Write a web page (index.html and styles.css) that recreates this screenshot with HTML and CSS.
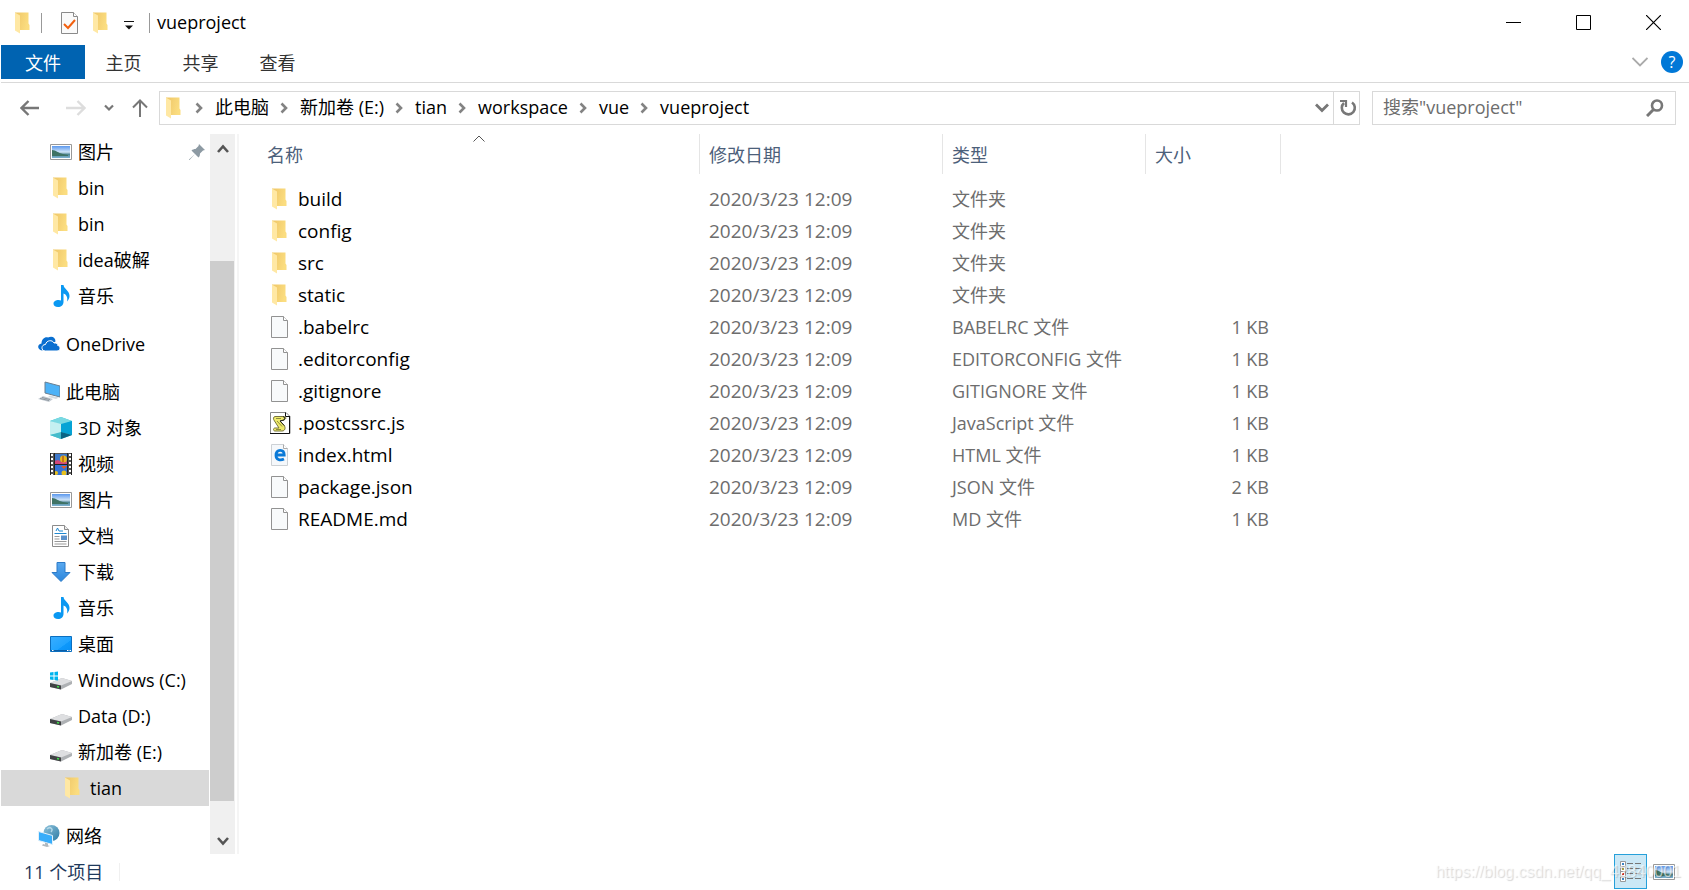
FILE: index.html
```html
<!DOCTYPE html>
<html lang="zh-CN">
<head>
<meta charset="utf-8">
<title>vueproject</title>
<link rel="stylesheet" href="styles.css">
</head>
<body>
<svg class="defs" aria-hidden="true">
  <defs>
    <linearGradient id="gf" x1="0" x2="1" y1="0" y2="0.3"><stop offset="0" stop-color="#eec566"/><stop offset="1" stop-color="#fbdd80"/></linearGradient>
    <linearGradient id="gp" x1="0" x2="0" y1="0" y2="1"><stop offset="0" stop-color="#5b98ee"/><stop offset="0.5" stop-color="#cfe4f8"/><stop offset="0.7" stop-color="#4f8694"/><stop offset="1" stop-color="#7fb4d4"/></linearGradient>
    <linearGradient id="gd" x1="0" x2="1" y1="0" y2="1"><stop offset="0" stop-color="#3aaeff"/><stop offset="0.6" stop-color="#1fa3ff"/><stop offset="0.62" stop-color="#0d98fb"/><stop offset="1" stop-color="#0890f5"/></linearGradient>
    <linearGradient id="ga" x1="0" x2="0" y1="0" y2="1"><stop offset="0" stop-color="#5aa9ef"/><stop offset="1" stop-color="#2b86dc"/></linearGradient>
    <linearGradient id="gg" x1="0" x2="1" y1="0" y2="1"><stop offset="0" stop-color="#8fc3dc"/><stop offset="1" stop-color="#2d7ba4"/></linearGradient>
    <symbol id="folder" viewBox="0 0 22 22"><path d="M3 .5h13.500v11l1 1.500v5H3z" fill="url(#gf)"/><path d="M3 .5l5 3v18L3 18.500z" fill="#ffe8a4"/></symbol>
    <symbol id="picture" viewBox="0 0 22 22"><path d="M.5 3.500h21v15H.5z" fill="#fff" stroke="#999"/><path d="M2 5h18v12H2z" fill="url(#gp)"/><path d="M2 9c4 0 6 3 11 4l5 1v1H2z" fill="#3f7364"/></symbol>
    <symbol id="music" viewBox="0 0 22 22"><path d="M11 0h2.500c.5 4 6 5.500 6 11 0 2-1 4-2.500 5.500 1-4-.5-7-3.500-8V17c0 3-2.500 5-5.500 5S3.500 20.500 3.500 18.500s2.500-3.500 5-3.500c1 0 1.800.2 2.500.5z" fill="#0a98f2"/></symbol>
    <symbol id="cloud" viewBox="0 0 22 22"><path d="M4 17.500c-5-.5-5-6.500-.5-7C3.500 6 7 3.500 10 4.500c4-2 7.500 0 7.500 4" fill="#0a6fd0"/><path d="M7.500 18C2.500 18 3 11.500 7.500 11.500 8.500 7 14.500 6.500 16 10c3-.5 4 1 3.700 2.500 3.300.5 3 5.500-.7 5.500z" fill="#0a6fd0" stroke="#fff"/></symbol>
    <symbol id="pc" viewBox="0 0 22 22"><path d="M7 1l15 4v11L7 12z" fill="#4db2f7" stroke="#6b7f90"/><path d="M0 18l5-3 10 3-4 3z" fill="#c6cdd4"/><path d="M2 17.500l9 2M4 16.500l8 2" stroke="#8d969e"/><path d="M12 14.500l4 1 5 1-3 1.500-8-2z" fill="#d7dce0"/></symbol>
    <symbol id="cube" viewBox="0 0 22 22"><path d="M11 0L0 4v14l11 4 11-4V4z" fill="#35c3d4"/><path d="M11 0L0 4l11 4 11-4z" fill="#7ad9e2"/><path d="M0 4l11 3v9L0 18z" fill="#c5f0f1"/><path d="M11 7l11-3v14l-11-3z" fill="#06a3d5"/><path d="M0 18l11-3v7z" fill="#45bccb"/><path d="M11 15l11 3-11 4z" fill="#0a6484"/></symbol>
    <symbol id="video" viewBox="0 0 22 22"><path d="M0 0h22v22H0z" fill="#555"/><path d="M4 1h14v10H4z" fill="#3d78c9"/><path d="M4 12h14v10H4z" fill="#3472d6"/><path d="M4 8l4-1 4 2 6-1v3H4z" fill="#d3477a"/><circle cx="13.500" cy="6" r="3.500" fill="#e7b719"/><path d="M13 3v6" stroke="#a52c20"/><path d="M11 13h6l-3 3z" fill="#e75a20"/><circle cx="6" cy="20" r="2" fill="#e7c01d"/><circle cx="14" cy="20" r="2.500" fill="#e7c01d"/><path d="M2 1v21M20 1v21" stroke="#fff" stroke-width="2" stroke-dasharray="2 2"/><path d="M4.500 0v22M17.500 0v22M4 11.500h14M.5 0v22M21.500 0v22" stroke="#222"/></symbol>
    <symbol id="doc" viewBox="0 0 22 22"><path d="M2.500.5h12l4 4v17h-16z" fill="#fff" stroke="#8b8b8b"/><path d="M14.500.5v4h4" fill="#eee" stroke="#8b8b8b"/><path d="M4.500 8.500h12M9 6h4" stroke="#1f88d0"/><path d="M6 6l1.500-3L9 6" stroke="#1f88d0" fill="none"/><path d="M4.500 11.500h5M4.500 14h5M4.500 16.500h12M4.500 19h12" stroke="#999"/><path d="M11 10.500h6v4.500h-6z" fill="#5a90c9"/></symbol>
    <symbol id="down" viewBox="0 0 22 22"><path d="M7 1.500h8v10h5L11 20.500 2 11.500h5z" fill="url(#ga)" stroke="#2d7bc8"/></symbol>
    <symbol id="desktop" viewBox="0 0 22 22"><path d="M.5 3.500h21v15H.5z" fill="url(#gd)" stroke="#0b6fc0"/><path d="M1 17.500h20" stroke="#0b5da5"/><path d="M2 17.500h1.500M17 17.500h1.500M19.500 17.500H21" stroke="#fff"/></symbol>
    <symbol id="disk" viewBox="0 0 22 22"><path d="M0 14l12-5 10 3v3l-11 5.500L0 18z" fill="#aeb1b4"/><path d="M0 14l12-5 10 3-11 4.500z" fill="#dedfe1"/><path d="M0 14l11 2.500v4L0 18z" fill="#404244"/><path d="M7 17.500l2 .5" stroke="#3fe04b" stroke-width="1.500"/></symbol>
    <symbol id="win" viewBox="0 0 22 22"><use href="#disk"/><path d="M0 3.500l3.500-.5v3.500H0zM4.500 3L8 2.500v4H4.500zM0 7.500h3.500V11L0 10.500zM4.500 7.500H8v4l-3.500-.5z" fill="#00b4ee"/></symbol>
    <symbol id="net" viewBox="0 0 22 22"><circle cx="13.500" cy="8" r="8" fill="url(#gg)"/><path d="M9 4c3-3 7 0 4 3" stroke="#b4d8e8" stroke-width="1.500" fill="none"/><path d="M.5 6.500l14 4v9l-14-4z" fill="#38adfa" stroke="#e2f1fa"/><path d="M5 19l7 2-3 1-5-1.500zM7 17.500l3 1v2l-3-1z" fill="#b0b8be"/></symbol>
    <symbol id="file" viewBox="0 0 22 22"><path d="M2.500.5h12l4 4v17h-16z" fill="#f8fafb" stroke="#929292"/><path d="M14.500.5v4h4" fill="#fff" stroke="#929292"/></symbol>
    <symbol id="js" viewBox="0 0 22 22"><path d="M1.500.5H17l4 4v17H1.500z" fill="#fff" stroke="#888"/><path d="M20.500 4v17.500H1" fill="none" stroke="#111"/><path d="M16.500.5v4h4" fill="none" stroke="#111"/><path d="M6 4.500h8c3 0 4 2 1 3.500l-4 1 4 4c2 3 1 6-2 6H6c-2 0-2-3 0-3h4L5.500 9C4 7 4 5 6 4.500z" fill="#eeea6a" stroke="#77743a"/><path d="M7 6.500h5M8 9l5 5.500M7 17.500h5" stroke="#8f8b3c"/><path d="M14 4.500l2 1.500-1 2-4 1 4 4.500" stroke="#222" fill="none"/></symbol>
    <symbol id="html" viewBox="0 0 22 22"><path d="M2.500.5h12l4 4v17h-16z" fill="#f5f8fb" stroke="#cdd1d5"/><path d="M14.500.5v4h4" fill="#fff" stroke="#aaa"/><path d="M15 15c-4 2-8 .5-8-3.500 0-3.500 2-5.200 4.200-5.200S15.200 8 15.200 11H7.500" fill="none" stroke="#0b7ad8" stroke-width="2.800"/></symbol>
    <symbol id="sep" viewBox="0 0 8 12"><path d="M1.500 1.500L6 6l-4.500 4.500" fill="none" stroke="#838383" stroke-width="2.600"/></symbol>
  </defs>
</svg>
<div class="window">
  <header class="titlebar">
    <svg class="ico"><use href="#folder"/></svg>
    <span class="rule rule-a"></span>
    <button class="quick" aria-label="属性"><svg class="ico" viewBox="0 0 22 22"><path d="M2.500.5h12l4 4v17h-16z" fill="#fafafa" stroke="#8a8a8a"/><path d="M14.500.5v4h4" fill="#fff" stroke="#8a8a8a"/><path d="M5 12l4 4 7-8" fill="none" stroke="#f2600f" stroke-width="2"/></svg></button>
    <button class="quick quick-new" aria-label="新建文件夹"><svg class="ico"><use href="#folder"/></svg></button>
    <button class="quick quick-more" aria-label="自定义快速访问工具栏"><svg width="10" height="10" viewBox="0 0 10 10"><path d="M0 1.500h10" stroke="#111"/><path d="M1 5.500h8L5 9.500z" fill="#111"/></svg></button>
    <span class="rule rule-b"></span>
    <h1 class="title">vueproject</h1>
    <div class="winbtns">
      <button aria-label="最小化"><svg width="15" height="15"><path d="M0 7.500h15" stroke="#000"/></svg></button>
      <button aria-label="最大化"><svg width="15" height="15"><path d="M.5.5h14v14H.5z" fill="none" stroke="#000"/></svg></button>
      <button aria-label="关闭"><svg width="15" height="15"><path d="M0 0l15 15M15 0L0 15" stroke="#000" stroke-width="1.200"/></svg></button>
    </div>
  </header>
  <nav class="ribbon">
    <button class="tab tab-file">文件</button>
    <button class="tab">主页</button>
    <button class="tab">共享</button>
    <button class="tab">查看</button>
    <button class="expand" aria-label="展开功能区"><svg width="16" height="10"><path d="M.5 1L8 8.500 15.500 1" fill="none" stroke="#aaa" stroke-width="1.800"/></svg></button>
    <button class="help" aria-label="帮助">?</button>
  </nav>
  <div class="address-row">
    <div class="navbtns">
      <button class="nav-back" aria-label="后退"><svg width="20" height="16"><path d="M19 8H2M8.500 1L1.500 8l7 7" fill="none" stroke="#777" stroke-width="2.400"/></svg></button>
      <button class="nav-fwd" aria-label="前进"><svg width="20" height="16"><path d="M0 8h18M11.500 1l7 7-7 7" fill="none" stroke="#ddd" stroke-width="2.400"/></svg></button>
      <button class="nav-recent" aria-label="最近"><svg width="10" height="8"><path d="M1 1.500l4 4 4-4" fill="none" stroke="#777" stroke-width="2.200"/></svg></button>
      <button class="nav-up" aria-label="向上"><svg width="16" height="18"><path d="M8 18V2M1 8.500l7-7 7 7" fill="none" stroke="#777" stroke-width="2"/></svg></button>
    </div>
    <div class="address">
      <svg class="ico addr-ico"><use href="#folder"/></svg>
      <svg class="sep"><use href="#sep"/></svg><button class="crumb">此电脑</button>
      <svg class="sep"><use href="#sep"/></svg><button class="crumb">新加卷 (E:)</button>
      <svg class="sep"><use href="#sep"/></svg><button class="crumb">tian</button>
      <svg class="sep"><use href="#sep"/></svg><button class="crumb">workspace</button>
      <svg class="sep"><use href="#sep"/></svg><button class="crumb">vue</button>
      <svg class="sep"><use href="#sep"/></svg><button class="crumb">vueproject</button>
      <button class="history" aria-label="以前的位置"><svg width="14" height="10"><path d="M1 1.500l6 6 6-6" fill="none" stroke="#777" stroke-width="2.800"/></svg></button>
      <button class="refresh" aria-label="刷新"><svg width="18" height="18" viewBox="0 0 18 18"><path d="M13 3.500A6.500 6.500 0 1 1 5 4" fill="none" stroke="#777" stroke-width="2.600"/><path d="M1 2h6v6" fill="none" stroke="#777" stroke-width="2.200"/></svg></button>
    </div>
    <div class="search">
      <input type="search" aria-label="搜索" placeholder='搜索"vueproject"'>
      <svg width="18" height="18" viewBox="0 0 18 18"><circle cx="11" cy="6.500" r="5" fill="none" stroke="#777" stroke-width="2.600"/><path d="M7.500 10.500L1 17" stroke="#777" stroke-width="3"/></svg>
    </div>
  </div>
  <div class="main">
    <nav class="tree">
      <a class="node" href="#"><svg class="ico"><use href="#picture"/></svg>图片<svg class="pin" width="16" height="16" viewBox="0 0 16 16"><path d="M10 0l6 6-2 .5-3 3c0 2-.5 3-1.500 4L6 10l-5.500 6H0v-.5L6 10 2.500 6.500c1-1 2.500-1.500 4-1.500l3-3z" fill="#8d9aa3"/></svg></a>
      <a class="node" href="#"><svg class="ico"><use href="#folder"/></svg>bin</a>
      <a class="node" href="#"><svg class="ico"><use href="#folder"/></svg>bin</a>
      <a class="node" href="#"><svg class="ico"><use href="#folder"/></svg>idea破解</a>
      <a class="node" href="#"><svg class="ico"><use href="#music"/></svg>音乐</a>
      <a class="node root" href="#"><svg class="ico"><use href="#cloud"/></svg>OneDrive</a>
      <a class="node root" href="#"><svg class="ico"><use href="#pc"/></svg>此电脑</a>
      <a class="node" href="#"><svg class="ico"><use href="#cube"/></svg>3D 对象</a>
      <a class="node" href="#"><svg class="ico"><use href="#video"/></svg>视频</a>
      <a class="node" href="#"><svg class="ico"><use href="#picture"/></svg>图片</a>
      <a class="node" href="#"><svg class="ico"><use href="#doc"/></svg>文档</a>
      <a class="node" href="#"><svg class="ico"><use href="#down"/></svg>下载</a>
      <a class="node" href="#"><svg class="ico"><use href="#music"/></svg>音乐</a>
      <a class="node" href="#"><svg class="ico"><use href="#desktop"/></svg>桌面</a>
      <a class="node" href="#"><svg class="ico"><use href="#win"/></svg>Windows (C:)</a>
      <a class="node" href="#"><svg class="ico"><use href="#disk"/></svg>Data (D:)</a>
      <a class="node" href="#"><svg class="ico"><use href="#disk"/></svg>新加卷 (E:)</a>
      <a class="node child selected" href="#"><svg class="ico"><use href="#folder"/></svg>tian</a>
      <a class="node root" href="#"><svg class="ico"><use href="#net"/></svg>网络</a>
    </nav>
    <div class="scrollbar">
      <button aria-label="向上滚动"><svg width="12" height="10"><path d="M1 8l5-5.500L11 8" fill="none" stroke="#555" stroke-width="2.600"/></svg></button>
      <div class="track-top"></div>
      <div class="thumb"></div>
      <div class="track-bottom"></div>
      <button aria-label="向下滚动"><svg width="12" height="10"><path d="M1 2l5 5.500L11 2" fill="none" stroke="#555" stroke-width="2.600"/></svg></button>
    </div>
    <section class="files">
      <table>
        <colgroup><col class="c-name"><col class="c-date"><col class="c-type"><col class="c-size"></colgroup>
        <thead><tr><th>名称<svg class="sort" width="12" height="7"><path d="M.5 6.500L6 1l5.500 5.500" fill="none" stroke="#555"/></svg></th><th>修改日期</th><th>类型</th><th>大小</th></tr></thead>
        <tbody>
          <tr><td><svg class="ico"><use href="#folder"/></svg>build</td><td class="date">2020/3/23 12:09</td><td>文件夹</td><td></td></tr>
          <tr><td><svg class="ico"><use href="#folder"/></svg>config</td><td class="date">2020/3/23 12:09</td><td>文件夹</td><td></td></tr>
          <tr><td><svg class="ico"><use href="#folder"/></svg>src</td><td class="date">2020/3/23 12:09</td><td>文件夹</td><td></td></tr>
          <tr><td><svg class="ico"><use href="#folder"/></svg>static</td><td class="date">2020/3/23 12:09</td><td>文件夹</td><td></td></tr>
          <tr><td><svg class="ico"><use href="#file"/></svg>.babelrc</td><td class="date">2020/3/23 12:09</td><td>BABELRC 文件</td><td>1 KB</td></tr>
          <tr><td><svg class="ico"><use href="#file"/></svg>.editorconfig</td><td class="date">2020/3/23 12:09</td><td>EDITORCONFIG 文件</td><td>1 KB</td></tr>
          <tr><td><svg class="ico"><use href="#file"/></svg>.gitignore</td><td class="date">2020/3/23 12:09</td><td>GITIGNORE 文件</td><td>1 KB</td></tr>
          <tr><td><svg class="ico"><use href="#js"/></svg>.postcssrc.js</td><td class="date">2020/3/23 12:09</td><td>JavaScript 文件</td><td>1 KB</td></tr>
          <tr><td><svg class="ico"><use href="#html"/></svg>index.html</td><td class="date">2020/3/23 12:09</td><td>HTML 文件</td><td>1 KB</td></tr>
          <tr><td><svg class="ico"><use href="#file"/></svg>package.json</td><td class="date">2020/3/23 12:09</td><td>JSON 文件</td><td>2 KB</td></tr>
          <tr><td><svg class="ico"><use href="#file"/></svg>README.md</td><td class="date">2020/3/23 12:09</td><td>MD 文件</td><td>1 KB</td></tr>
        </tbody>
      </table>
    </section>
  </div>
  <footer class="status">
    <span class="count">11 个项目</span>
    <div class="views">
      <button class="view active" aria-label="详细信息"><svg width="22" height="22" viewBox="0 0 22 22"><path d="M.5.500h5v20h-5zM.5 5.500h5M.5 10.500h5M.5 15.500h5" fill="#fff" stroke="#999"/><path d="M2 3h2M2 18h2" stroke="#3b85c4" stroke-width="2"/><path d="M2 8h2" stroke="#a8a04a" stroke-width="2"/><path d="M2 13h2" stroke="#d33" stroke-width="2"/><path d="M7 2.500h6M15 2.500h6M7 7.500h6M15 7.500h6M7 12.500h6M15 12.500h6M7 17.500h6M15 17.500h6" stroke="#777"/></svg></button>
      <button class="view" aria-label="大图标"><svg class="ico"><use href="#picture"/></svg></button>
      <span class="watermark">https://blog.csdn.net/qq_42840001</span>
    </div>
  </footer>
</div>
</body>
</html>
```
FILE: styles.css
```css
* { box-sizing: border-box; }
body {
  margin: 0;
  background: #fff;
  color: #000;
  font: 18px/24px "Open Sans", "Noto Sans CJK SC", sans-serif;
}
button, input { font: inherit; color: inherit; background: none; border: 0; padding: 0; margin: 0; }
a { color: inherit; text-decoration: none; }
svg { flex: none; display: block; }
.defs { position: absolute; width: 0; height: 0; }
.ico { width: 22px; height: 22px; }
.window { display: flex; flex-direction: column; min-height: 100vh; padding-left: 1px; }

.titlebar { display: flex; align-items: center; height: 45px; padding-left: 11px; }
.rule { width: 1px; height: 20px; background: #999; }
.rule-a { margin: 0 17px 0 7px; }
.quick-new { margin-left: 9px; }
.quick-more { margin: 5px 15px 0 12px; }
.title { margin: 0 0 0 7px; padding-bottom: 2px; font-size: 18px; font-weight: 400; }
.winbtns { display: flex; margin-left: auto; padding-right: 1px; }
.winbtns button { display: grid; place-items: center; width: 70px; height: 45px; }

.ribbon { display: flex; align-items: center; height: 38px; padding-bottom: 3px; border-bottom: 1px solid #d9d9d9; color: #333; }
.tab { width: 77px; height: 34px; padding-top: 2px; }
.tab-file { width: 84px; background: #0063b1; color: #fff; }
.expand { margin-left: auto; margin-right: 13px; }
.help { width: 22px; height: 22px; margin-right: 6px; border-radius: 50%; background: #0078d7; color: #fff; font-size: 16px; line-height: 22px; }

.address-row { display: flex; align-items: center; padding: 8px 13px 9px 0; }
.navbtns { display: flex; align-items: center; width: 158px; padding-left: 19px; }
.nav-fwd { margin-left: 26px; }
.nav-recent { margin-left: 18px; }
.nav-up { margin-left: 18px; }
.address { display: flex; flex: 1; align-items: center; height: 34px; border: 1px solid #d9d9d9; }
.addr-ico { margin-left: 3px; margin-right: 5px; }
.sep { width: 8px; height: 12px; margin-left: 5px; }
.crumb { margin: 0 6px 0 12px; padding-bottom: 2px; }
.history { margin-left: auto; margin-right: 4px; }
.refresh { display: grid; place-items: center; width: 26px; height: 32px; padding-left: 3px; border-left: 1px solid #d9d9d9; }
.search { display: flex; align-items: center; width: 304px; height: 34px; margin-left: 12px; padding: 0 11px 0 10px; border: 1px solid #d9d9d9; }
.search input { flex: 1; min-width: 0; padding-bottom: 2px; outline: 0; }
.search input::placeholder { color: #6d6d6d; opacity: 1; }

.main { display: flex; flex: 1; }
.tree { width: 209px; }
.node { display: flex; align-items: center; gap: 6px; height: 36px; margin-right: 1px; padding-left: 49px; white-space: nowrap; }
.node.root { margin-top: 12px; padding-left: 37px; }
.node.child { padding-left: 61px; }
.selected { background: #d9d9d9; }
.pin { margin: 0 4px 0 auto; }
.scrollbar { display: flex; flex-direction: column; width: 25px; background: #f0f0f0; }
.scrollbar button { display: grid; place-items: center; height: 28px; padding-top: 2px; }
.track-top { flex: 99; }
.thumb { flex: 540; margin-right: 1px; background: #cdcdcd; }
.track-bottom { flex: 25; }
.files { flex: 1; margin-left: 2px; padding-left: 19px; border-left: 2px solid #f5f5f5; }
table { table-layout: fixed; width: 1023px; border-collapse: separate; border-spacing: 0; }
.c-name { width: 442px; }
.c-date { width: 243px; }
.c-type { width: 203px; }
.c-size { width: 135px; }
th { position: relative; height: 40px; padding: 2px 9px 0; border-right: 1px solid #e5e5e5; color: #4c607a; font-weight: 400; text-align: left; }
.sort { position: absolute; left: 50%; top: 1px; margin-left: -6px; }
thead::after { content: ""; display: block; height: 9px; }
td { height: 32px; padding: 0 9px; color: #6d6d6d; white-space: nowrap; }
td:first-child { display: flex; align-items: center; gap: 7px; padding-left: 11px; color: #000; }
td:first-child, .date { font-size: 19px; }
td:last-child { text-align: right; padding-right: 12px; }

.status { display: flex; align-items: center; height: 36px; padding: 0 14px 0 23px; color: #1e395b; }
.count { padding-right: 16px; border-right: 1px solid #f0f0f0; line-height: 18px; }
.views { position: relative; display: flex; align-items: center; gap: 6px; margin-left: auto; padding-bottom: 1px; }
.view { display: grid; place-items: center; height: 35px; }
.view.active { width: 33px; border: 1px solid #26a0da; background: #cbe8f6; }
.watermark { position: absolute; right: -6px; font: 16px/20px "Liberation Sans", sans-serif; color: rgba(255, 255, 255, 0.6); text-shadow: 1px 1px 1px rgba(0, 0, 0, 0.16); pointer-events: none; }
```
